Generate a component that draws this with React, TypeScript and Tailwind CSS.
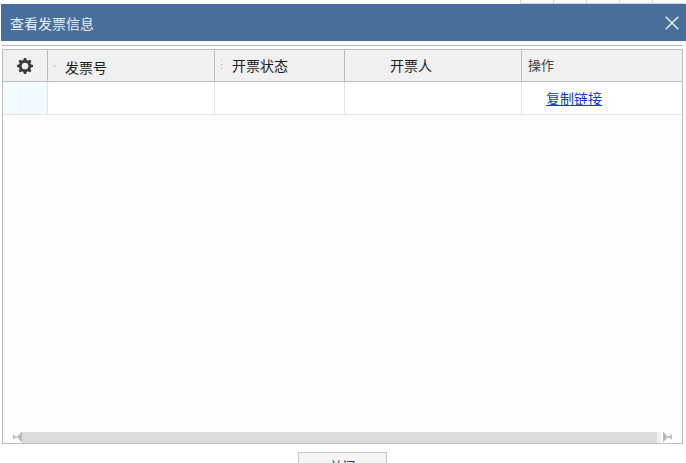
import { clsx } from "clsx";

const backdropCells = [1, 2, 3, 4, 5];
const gearTeeth = [0, 45, 90, 135, 180, 225, 270, 315];

const cellBorder = "border-r border-[#e4e4e4]";
const headBorder = "border-r border-[#bcbcbc]";

function GearIcon() {
  return (
    <svg viewBox="0 0 16 16" className="size-4" aria-hidden="true">
      <circle cx="8" cy="8" r="4.7" fill="none" stroke="#3a3a3a" strokeWidth="2.7" />
      {gearTeeth.map((angle) => (
        <path
          key={angle}
          d="M5.9 3 L7 0 H9 L10.1 3 Z"
          fill="#3a3a3a"
          transform={`rotate(${angle} 8 8)`}
        />
      ))}
    </svg>
  );
}

function CloseIcon() {
  return (
    <svg viewBox="0 0 14 14" className="size-3.5" aria-hidden="true">
      <path d="M0.7 0.7 L13.3 13.3 M13.3 0.7 L0.7 13.3" stroke="#e6edf5" strokeWidth="1.5" />
    </svg>
  );
}

function GripDots() {
  return (
    <svg viewBox="0 0 1 10" className="h-2.5 w-px" aria-hidden="true">
      <path d="M0 0 H1 V1 H0 Z M0 4 H1 V5 H0 Z M0 8 H1 V9 H0 Z" fill="#b0b0b0" />
    </svg>
  );
}

function ScrollArrow({ flipped }: { flipped?: boolean }) {
  return (
    <svg
      viewBox="0 0 9 12"
      className={clsx("h-3 w-[9px]", flipped && "rotate-180")}
      aria-hidden="true"
    >
      <path d="M9 0.5 V11.5 L4 6 Z" fill="#b8b8b8" />
      <path d="M0 3 L2 5 H4 V7 H2 L0 9 Z" fill="#c0c0c0" />
    </svg>
  );
}

function InvoiceTable() {
  return (
    <table className="w-full table-fixed border-separate border-spacing-0 text-left text-sm text-[#1c1c1c]">
      <colgroup>
        <col className="w-[45px]" />
        <col className="w-[167px]" />
        <col className="w-[130px]" />
        <col className="w-[177px]" />
        <col />
      </colgroup>
      <thead>
        <tr className="h-8 bg-[#f0f0f0] *:border-b *:border-b-[#bcbcbc]">
          <th className={clsx("p-0 font-normal", headBorder)}>
            <button type="button" aria-label="设置" className="mx-auto block">
              <GearIcon />
            </button>
          </th>
          <th className={clsx("p-0 font-normal", headBorder)}>
            <div className="flex items-center">
              <span className="ml-1.5 h-0.5 w-px bg-[#d9b48c]" />
              <span className="ml-2.5 pt-0.5 leading-5">发票号</span>
            </div>
          </th>
          <th className={clsx("p-0 pb-0.5 font-normal", headBorder)}>
            <div className="flex items-center gap-2.5 pl-1.5">
              <GripDots />
              <span className="leading-5">开票状态</span>
            </div>
          </th>
          <th className={clsx("p-0 pb-0.5 pl-[45px] font-normal leading-5", headBorder)}>开票人</th>
          <th className="p-0 pb-0.5 pl-1.5 text-[13px] font-normal leading-5 text-[#444]">操作</th>
        </tr>
      </thead>
      <tbody>
        <tr className="h-[33px] bg-white *:border-b *:border-b-[#e4e4e4]">
          <td className={clsx("bg-[#f4fbff] p-0", cellBorder)} />
          <td className={clsx("p-0", cellBorder)} />
          <td className={clsx("p-0", cellBorder)} />
          <td className={clsx("p-0", cellBorder)} />
          <td className="p-0 pl-6 leading-5">
            <a href="#copy" className="text-[#1238d8] underline">
              复制链接
            </a>
          </td>
        </tr>
      </tbody>
    </table>
  );
}

export default function App() {
  return (
    <main className="flex h-screen flex-col overflow-hidden bg-white font-['Noto_Sans_CJK_SC',sans-serif]">
      <div className="flex h-1 shrink-0 justify-end pr-px">
        {backdropCells.map((cell) => (
          <span key={cell} className="w-[33px] border-b border-l border-[#d4d4d4]" />
        ))}
      </div>

      <section
        role="dialog"
        aria-labelledby="dialog-title"
        className="ml-px flex min-h-0 flex-1 flex-col"
      >
        <header className="flex h-[37px] shrink-0 items-center justify-between bg-[#486f9b] pr-[7px] pl-[9px]">
          <h1 id="dialog-title" className="text-sm leading-5 text-[#e8eff7]">
            查看发票信息
          </h1>
          <button type="button" aria-label="关闭窗口">
            <CloseIcon />
          </button>
        </header>
        <div className="mr-[3px] ml-px h-[5px] shrink-0 border-b border-[#b4b4b4]" />

        <div className="mt-[3px] mr-[3px] ml-px flex min-h-0 flex-1 flex-col border border-[#bcbcbc] bg-[#fdfdfd]">
          <InvoiceTable />
          <div className="mt-auto flex h-3 items-center pr-2.5 pl-2.5">
            <ScrollArrow />
            <div className="h-[11px] flex-1 bg-[#dcdcdc]" />
            <div className="mr-0.5 h-[11px] w-1 bg-[#f0f0f0]" />
            <ScrollArrow flipped />
          </div>
        </div>

        <footer className="flex h-[19px] shrink-0 items-start justify-center pt-2 pr-0.5">
          <button
            type="button"
            className="h-7 w-[89px] shrink-0 border border-[#c4c4c4] bg-[#f5f5f5] text-[13px] leading-5 text-[#333]"
          >
            关闭
          </button>
        </footer>
      </section>
    </main>
  );
}
